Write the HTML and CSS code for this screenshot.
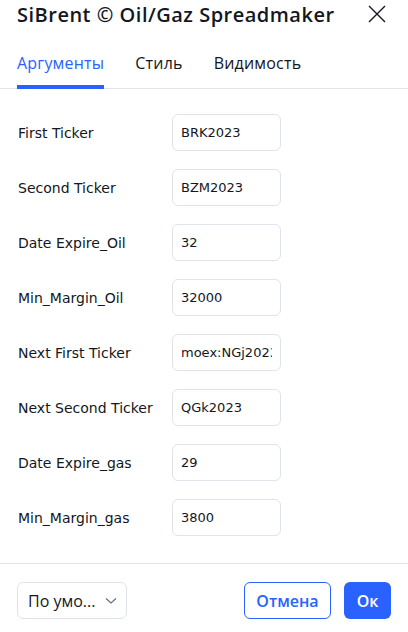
FILE: index.html
```html
<!DOCTYPE html>
<html lang="en">
<head>
    <meta charset="UTF-8">
    <meta name="viewport" content="width=device-width, initial-scale=1.0">
    <title>SiBrent Spreadmaker</title>
    <link rel="stylesheet" href="styles.css">
</head>
<body>
    <div class="dialog">
        <div class="header">
            <div class="title">SiBrent © Oil/Gaz Spreadmaker</div>
            <button class="close">
                <svg width="18" height="18" viewBox="0 0 18 18"><path d="M1 1l16 16M17 1L1 17" stroke="#131722" stroke-width="1.4" fill="none"/></svg>
            </button>
        </div>
        <div class="tabs">
            <div class="tab active">Аргументы</div>
            <div class="tab">Стиль</div>
            <div class="tab">Видимость</div>
        </div>
        <div class="content">
            <div class="row"><div class="label">First Ticker</div><input class="field" value="BRK2023"></div>
            <div class="row"><div class="label">Second Ticker</div><input class="field" value="BZM2023"></div>
            <div class="row"><div class="label">Date Expire_Oil</div><input class="field" value="32"></div>
            <div class="row"><div class="label">Min_Margin_Oil</div><input class="field" value="32000"></div>
            <div class="row"><div class="label">Next First Ticker</div><input class="field" value="moex:NGj2023"></div>
            <div class="row"><div class="label">Next Second Ticker</div><input class="field" value="QGk2023"></div>
            <div class="row"><div class="label">Date Expire_gas</div><input class="field" value="29"></div>
            <div class="row"><div class="label">Min_Margin_gas</div><input class="field" value="3800"></div>
        </div>
        <div class="footer">
            <div class="select">
                <span>По умо...</span>
                <svg width="12" height="8" viewBox="0 0 12 8"><path d="M1 1.5l5 4.5 5-4.5" stroke="#6a6d78" stroke-width="1.2" fill="none"/></svg>
            </div>
            <div class="actions">
                <button class="btn cancel">Отмена</button>
                <button class="btn ok">Ок</button>
            </div>
        </div>
    </div>
</body>
</html>
```

FILE: styles.css
```css
body {
    margin: 0;
    padding: 0;
    background-color: #fff;
    font-family: "DejaVu Sans", sans-serif;
    color: #131722;
}
.dialog {
    width: 408px;
    height: 632px;
    display: flex;
    flex-direction: column;
}
.header {
    display: flex;
    justify-content: space-between;
    align-items: center;
    padding: 0 22px 0 17px;
    height: 28px;
}
.title {
    font-family: "Open Sans", sans-serif;
    font-size: 20px;
    font-weight: 600;
    letter-spacing: 0.5px;
}
.close {
    border: none;
    background: none;
    padding: 0;
    width: 18px;
    height: 18px;
    cursor: pointer;
}
.tabs {
    display: flex;
    gap: 31px;
    padding: 0 17px;
    margin-top: 20px;
    border-bottom: 1px solid #e0e3eb;
}
.tab {
    font-family: "Open Sans", sans-serif;
    font-size: 16px;
    font-weight: 500;
    letter-spacing: 0.2px;
    padding: 4px 0 11px;
    border-bottom: 4px solid transparent;
    margin-bottom: -1px;
}
.tab.active {
    color: #2962ff;
    border-bottom-color: #2962ff;
}
.content {
    flex: 1;
    padding: 25px 0 0 18px;
    display: flex;
    flex-direction: column;
    gap: 18px;
}
.row {
    display: flex;
    align-items: center;
}
.label {
    width: 154px;
    font-size: 14px;
}
.field {
    width: 109px;
    height: 37px;
    box-sizing: border-box;
    border: 1px solid #e0e3eb;
    border-radius: 6px;
    padding: 0 8px;
    font-family: "DejaVu Sans", sans-serif;
    font-size: 13px;
    color: #131722;
    outline: none;
}
.footer {
    border-top: 1px solid #e0e3eb;
    display: flex;
    justify-content: space-between;
    align-items: center;
    padding: 18px 17px 13px;
}
.select {
    width: 110px;
    height: 37px;
    box-sizing: border-box;
    border: 1px solid #e0e3eb;
    border-radius: 6px;
    display: flex;
    align-items: center;
    justify-content: space-between;
    padding: 0 9px 0 10px;
    font-family: "Open Sans", sans-serif;
    font-size: 16px;
}
.actions {
    display: flex;
    gap: 13px;
}
.btn {
    height: 37px;
    border-radius: 6px;
    font-family: "Open Sans", sans-serif;
    font-size: 16px;
    font-weight: 600;
    cursor: pointer;
}
.cancel {
    width: 87px;
    background: #fff;
    color: #2962ff;
    border: 1px solid #2962ff;
}
.ok {
    width: 47px;
    background: #2962ff;
    color: #fff;
    border: none;
}
```
